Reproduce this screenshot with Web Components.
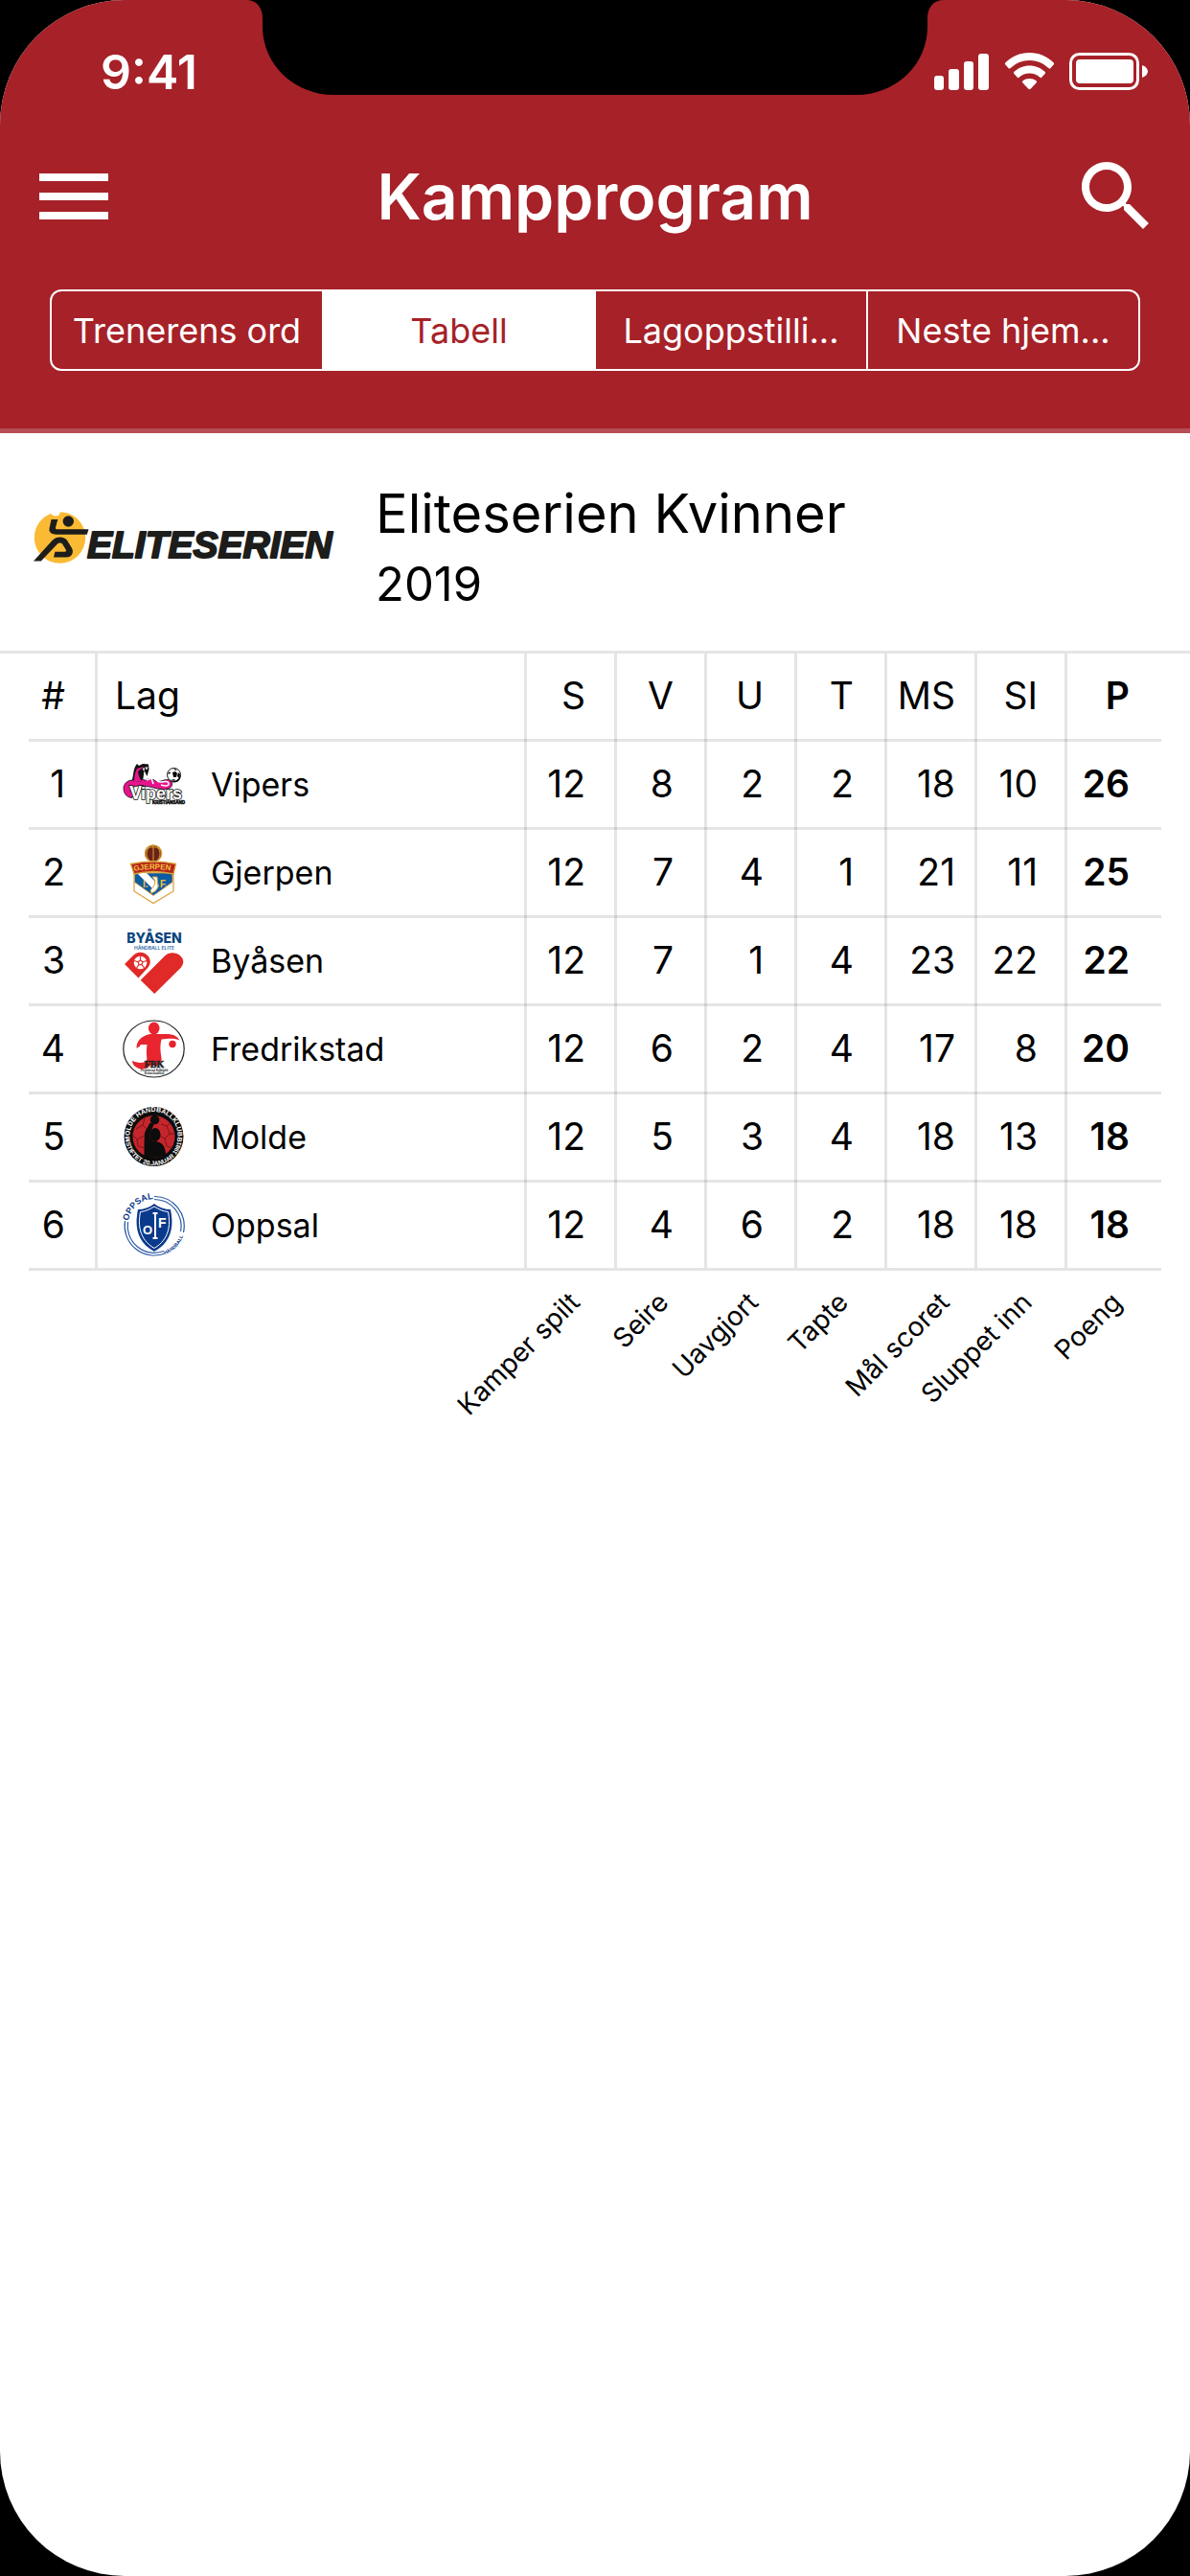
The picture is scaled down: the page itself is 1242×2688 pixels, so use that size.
<!DOCTYPE html>
<html lang="no">
<head>
<meta charset="utf-8">
<meta name="viewport" content="width=device-width, initial-scale=1">
<title>Kampprogram</title>
<style>
    body {
        margin: 0;
        background: #000;
        color: #000;
        font-family: Inter, "Liberation Sans", sans-serif;
        --brand: #a62128;
        --line: rgba(0, 0, 0, .1);
    }
</style>
</head>
<body>

<app-screen>
    <status-bar slot="header" time="9:41"></status-bar>
    <nav-bar slot="header">Kampprogram</nav-bar>
    <segment-control slot="header" selected="1" items="Trenerens ord|Tabell|Lagoppstilli...|Neste hjem..."></segment-control>
    <league-header>
        <span slot="name">Eliteserien Kvinner</span>
        <span slot="season">2019</span>
    </league-header>
    <standings-table></standings-table>
</app-screen>

<template id="appScreenTemplate">
    <style>
        :host {
            display: block;
            position: relative;
            min-height: 100vh;
            overflow: hidden;
            border-radius: 130px;
            background: #fff;
        }
        header {
            background: var(--brand);
            border-bottom: 5px solid #b84d54;
            padding-bottom: 60px;
        }
        .notch {
            position: absolute;
            top: 0;
            left: 50%;
            width: 728px;
            height: 99px;
            margin-left: -364px;
        }
    </style>
    <header><slot name="header"></slot></header>
    <main><slot></slot></main>
    <svg class="notch" viewBox="0 0 728 99" aria-hidden="true">
        <path d="M0 0C11 0 17 8 17 19V28A74 71 0 0 0 91 99H637A74 71 0 0 0 711 28V19C711 8 717 0 728 0Z"/>
    </svg>
</template>

<template id="statusBarTemplate">
    <style>
        :host {
            display: flex;
            justify-content: space-between;
            align-items: center;
            height: 157px;
            padding: 0 44px 0 105px;
            box-sizing: border-box;
            color: #fff;
        }
        .time, svg { margin-bottom: 8px; }
        .time {
            font-size: 50px;
            line-height: 60px;
            font-weight: 600;
        }
    </style>
    <span class="time"></span>
    <svg width="224" height="40" viewBox="0 0 224 40" fill="#fff" aria-hidden="true">
        <rect x="1" y="24" width="10" height="15" rx="3"/>
        <rect x="16" y="17" width="11" height="22" rx="3"/>
        <rect x="32" y="9" width="10" height="30" rx="3"/>
        <rect x="47" y="1" width="11" height="38" rx="3"/>
        <path d="M100.500 0c10 0 18.500 4 25 10.200.8.800.8 1.600.1 2.400l-3 3.300c-.7.800-1.500.7-2.300 0A29 29 0 0 0 100.500 8a29 29 0 0 0-19.800 7.900c-.8.700-1.600.8-2.300 0l-3-3.300c-.7-.8-.7-1.600.1-2.400C82 4 90.500 0 100.500 0z"/>
        <path d="M100.500 13.500c6.200 0 11.800 2.400 16 6.300.8.700.8 1.500.1 2.300l-3.200 3.500c-.7.700-1.500.7-2.300 0a15.600 15.600 0 0 0-21.200 0c-.8.700-1.600.7-2.300 0l-3.200-3.500c-.7-.8-.7-1.600.1-2.300 4.200-3.900 9.800-6.300 16-6.300z"/>
        <path d="M100.500 27c2.700 0 5 .9 6.900 2.300.9.700.9 1.500.1 2.300l-5.600 6c-.9.900-1.900.9-2.800 0l-5.600-6c-.8-.8-.8-1.600.1-2.300 1.900-1.400 4.200-2.300 6.900-2.300z"/>
        <rect x="143.500" y="1.500" width="70" height="36" rx="9" fill="none" stroke="#fff" stroke-width="3"/>
        <rect x="149" y="7" width="60" height="25" rx="4"/>
        <path d="M218 13c4 1.500 6 4 6 6.500s-2 5-6 6.500z"/>
    </svg>
</template>

<template id="navBarTemplate">
    <style>
        :host {
            display: grid;
            grid-template-columns: 96px 1fr 96px;
            align-items: center;
            padding: 0 29px;
            color: #fff;
        }
        h1 {
            margin: 0;
            font-size: 66px;
            line-height: 80px;
            font-weight: 600;
            text-align: center;
        }
        button {
            width: 96px;
            height: 96px;
            padding: 0;
            border: 0;
            background: none;
            cursor: pointer;
        }
        svg { display: block; fill: #fff; }
    </style>
    <button type="button" aria-label="Meny">
        <svg width="96" height="96" viewBox="0 0 24 24"><path d="M3 18h18v-2H3v2zm0-5h18v-2H3v2zm0-7v2h18V6H3z"/></svg>
    </button>
    <h1><slot></slot></h1>
    <button type="button" aria-label="Søk">
        <svg width="96" height="96" viewBox="0 0 24 24"><path d="M15.500 14h-.79l-.28-.27C15.410 12.590 16 11.110 16 9.500 16 5.910 13.090 3 9.500 3S3 5.910 3 9.500 5.910 16 9.500 16c1.610 0 3.090-.59 4.230-1.570l.27.28v.79l5 4.990L20.490 19l-4.990-5zm-6 0C7.010 14 5 11.990 5 9.500S7.010 5 9.500 5 14 7.010 14 9.500 11.990 14 9.500 14z"/></svg>
    </button>
</template>

<template id="segmentControlTemplate">
    <style>
        :host {
            display: block;
            margin: 49px 52px 0;
        }
        div {
            display: flex;
            border: 2px solid #fff;
            border-radius: 12px;
        }
        button {
            flex: 1 1 0;
            height: 81px;
            padding: 0;
            border: 0;
            border-left: 2px solid #fff;
            background: none;
            color: #fff;
            font: inherit;
            font-size: 36px;
            line-height: 48px;
            white-space: nowrap;
            cursor: pointer;
        }
        button:first-child {
            border-left: 0;
            border-radius: 10px 0 0 10px;
        }
        button:last-child { border-radius: 0 10px 10px 0; }
        button[aria-selected=true] {
            background: #fff;
            color: var(--brand);
        }
    </style>
    <div role="tablist"></div>
</template>

<template id="leagueHeaderTemplate">
    <style>
        :host {
            display: flex;
            align-items: center;
            gap: 41px;
            padding: 48px 35px 33px;
            border-bottom: 3px solid #e5e5e5;
        }
        .logo {
            flex: none;
            margin-bottom: 24px;
        }
        h2, p {
            margin: 0;
            line-height: 73px;
            font-weight: 400;
        }
        h2 { font-size: 56px; }
        p { font-size: 49px; }
    </style>
    <svg class="logo" width="316" height="54" viewBox="0 0 316 54">
        <circle cx="27.500" cy="27" r="26.700" fill="#fbba34"/>
        <path d="M17 -1q1 5 5.500 5.500T28 0z" fill="#fff"/>
        <g fill="#1d1d1b">
            <circle cx="36.300" cy="10" r="5.700"/>
            <path d="M18.500 8h6.800l-2.300 8.500c-.3 1.300.2 1.700 1.400 1.700H57.500l-1.700 5.600H24c-5 0-8.500-2.200-7.400-6.700z"/>
            <path d="M0 51.500L19.500 30c4.500-4.600 12.500-4.600 15.800.2l4.700 7.800c2.500 4.600-.3 9.500-5.500 9.500H21l1.400-5.800h10c1.600 0 2-1 1.300-2.300l-3.700-5.900c-1-1.500-3.600-1.500-5 0L7.800 51.500z"/>
            <text x="56" y="48" font-family="Liberation Sans, Arial, sans-serif" font-size="39" font-weight="700" font-style="italic" stroke="#1d1d1b" stroke-width="2" stroke-linejoin="round">ELITESERIEN</text>
        </g>
    </svg>
    <div>
        <h2><slot name="name"></slot></h2>
        <p><slot name="season"></slot></p>
    </div>
</template>

<template id="standingsTableTemplate">
    <style>
        :host {
            display: block;
            padding: 0 30px;
            font-size: 39px;
            line-height: 48px;
        }
        table {
            width: 100%;
            table-layout: fixed;
            border-spacing: 0;
        }
        .rank { width: 72px; }
        .num { width: 94px; }
        .points { width: 98px; }
        th, td {
            height: 92px;
            padding: 0 35px 5px 0;
            box-sizing: border-box;
            text-align: right;
            font-weight: 400;
            white-space: nowrap;
            background:
                linear-gradient(var(--line) 0 0) right top / 3px 100% no-repeat,
                linear-gradient(var(--line) 0 0) left bottom / 100% 3px no-repeat;
        }
        tbody tr:last-child > * {
            background-size: 3px calc(100% - 3px), 100% 3px;
        }
        tr > :nth-child(2) {
            padding-left: 18px;
            text-align: left;
        }
        tr > :nth-child(3) { padding-right: 33px; }
        tr > :nth-child(7) { padding-right: 23px; }
        tr > :nth-child(8) { padding-right: 31px; }
        thead tr > :last-child, tbody tr > :last-child {
            padding-right: 33px;
            background-image: none, linear-gradient(var(--line) 0 0);
            font-weight: 600;
        }
        thead th:first-child, tbody td:first-child { padding-right: 34px; }
        .team {
            display: flex;
            align-items: center;
            gap: 26px;
            padding: 2px 0 0 8px;
            font-size: 34px;
        }
        tfoot td {
            height: 160px;
            padding-top: 7px;
            vertical-align: top;
            background: none;
            font-size: 28px;
            line-height: 32px;
        }
        .legend {
            display: flex;
            justify-content: flex-end;
        }
        .legend span {
            transform: rotate(-45deg);
            transform-origin: right bottom;
        }
    </style>
    <table>
        <colgroup>
            <col class="rank"><col>
            <col class="num"><col class="num"><col class="num">
            <col class="num"><col class="num"><col class="num">
            <col class="points">
        </colgroup>
        <thead><tr></tr></thead>
        <tbody></tbody>
        <tfoot><tr></tr></tfoot>
    </table>
</template>

<template id="crest-vipers">
    <svg viewBox="0 0 66 68">
        <path d="M14 29C5 28 .8 33 1 38c.2 5 3 9 9 9.500l2-4c-4-1-5-5-2-7l8-2 13 2c8 3 18 3 20-1s0-7-4-7-7 2-10 2-5-3-8-3-4 1-5 2l-4-2 1-6-9 .5z" fill="#e6158c" stroke="#111" stroke-width=".8"/>
        <path d="M10 29c1-5 1-9 3-14l2-3 2 2 4-2 6 .5.500 5.500-2 7-3-6-1 8-3 4z" fill="#111"/>
        <path d="M12 30c0-5 1-9 3-13l7-2-6 5 1 5 3 6z" fill="#e6158c"/>
        <path d="M21 16l1 3 1-3M24 15l1 3 1-3" stroke="#fff" stroke-width=".8" fill="none"/>
        <path d="M31 27c4-1 4 5 9 4s8-1 8 2-5 2-8 1M25 29l5-2 2 6" fill="none" stroke="#fff" stroke-width="1.500"/>
        <circle cx="53.500" cy="23.500" r="7" fill="#fff" stroke="#111" stroke-width="1"/>
        <path d="M52 21l3-1 2 2-1 4-3 0zM47 23l2-3 1 2zM50 29l4-1 1 2zM58 21l2 2-1 4-2-2zM53 17l4 1-2 1z"/>
        <path d="M49 30c5 2 10-1 11-7 2 6-4 11-11 7z"/>
        <g font-family="Liberation Sans, Arial, sans-serif" font-weight="700" fill="#fff" stroke="#111" paint-order="stroke" stroke-width="1.600">
            <text x="7" y="49" font-size="20">V</text>
            <text x="19" y="49" font-size="18">ipers</text>
            <text x="31" y="54" font-size="4.500" stroke-width=".5" fill="#111">KRISTIANSAND</text>
        </g>
    </svg>
</template>

<template id="crest-gjerpen">
    <svg viewBox="0 0 66 68">
        <circle cx="32" cy="13.500" r="8.700" fill="#6b2318" stroke="#d9a036" stroke-width="1.300"/>
        <path d="M32 5v17M28 6c-4 5-4 11 0 15M36 6c4 5 4 11 0 15M25 9c5-3 9-3 14 0" fill="none" stroke="#d9a036" stroke-width="1"/>
        <path d="M12 34h41v19L32 65.500 12 53z" fill="#fff" stroke="#d9a036" stroke-width="1.200"/>
        <path d="M12.500 34h39.500v9.500L32 57.500 12.500 43.500z" fill="#0d5ba3" stroke="#d9a036" stroke-width=".8"/>
        <path d="M15 34h10l13 13-5 5z" fill="#fff"/>
        <path d="M31 38l3 4-1 5-4 5 1 3 4-2 3-4-1-11z" fill="#fff" stroke="#d9a036" stroke-width="1"/>
        <path d="M8.500 24.500q23.500-5 47 0L53 35q-21-5-41 0z" fill="#b5251f" stroke="#d9a036" stroke-width="1.300"/>
        <g font-family="Liberation Sans, Arial, sans-serif" font-weight="700" fill="#f3c23c">
            <path id="gjerpenArc" d="M12 32q20-4 42 0" fill="none"/>
            <text font-size="8"><textPath href="#gjerpenArc">GJERPEN</textPath></text>
            <text x="21" y="49" font-size="10">I.</text>
            <text x="39" y="49" font-size="10">F.</text>
        </g>
    </svg>
</template>

<template id="crest-byasen">
    <svg viewBox="0 0 66 68">
        <g font-family="Inter, sans-serif" fill="#0b457e" text-anchor="middle">
            <text x="33" y="15" font-size="14" font-weight="800">BYÅSEN</text>
            <text x="33" y="22" font-size="5" font-weight="600" fill="#2b6aa5">HÅNDBALL ELITE</text>
        </g>
        <path d="M2 37l8.500-8.500a10.500 10.500 0 0 1 16 0c3 4 3 8 0 12L16.500 51.500z" fill="#df2a28"/>
        <path d="M18.700 53.800L44 28.500c9-9 26 2 16.500 12.500L33.200 68z" fill="#df2a28"/>
        <circle cx="18.500" cy="35.500" r="6.800" fill="#fff"/>
        <path d="M18.500 33l2.500 1.800-1 2.900h-3l-1-2.900zM18.500 29v4M12 33.500l4 1.300M25 33.500l-4 1.300M14.500 41l2.500-3.300M22.500 41l-2.500-3.300" fill="none" stroke="#df2a28" stroke-width="1.200"/>
    </svg>
</template>

<template id="crest-fredrikstad">
    <svg viewBox="0 0 66 68">
        <ellipse cx="32.500" cy="33.500" rx="31.700" ry="29.500" fill="#fff" stroke="#222" stroke-width="1.200"/>
        <g fill="#e8252e">
            <ellipse cx="32.700" cy="12" rx="5.800" ry="6.500"/>
            <path d="M14.700 33C14 28 17 23 22 20.500 25 18.500 28 18 32 18h14c6 0 11 2 13.500 6.500-5.500-3-13.500-1.500-19-1C39 29 39 35 40.500 43c.5 5-2.500 7-4.500 8h-7c-4 3-9 5-12 3-5-2-7-5-7-8 5 2 11 3 15 0 1-3-1-8 .5-17h-7c.5 2-2.500 2.500-3.800 4z"/>
            <circle cx="52" cy="28.500" r="3.700"/>
        </g>
        <g font-family="Liberation Serif, Times New Roman, serif" font-weight="700" fill="#222" text-anchor="middle">
            <text x="33" y="53" font-size="10" stroke="#222" stroke-width=".5">FBK</text>
            <text x="33" y="57" font-size="3">Fredrikstad Ballklubb</text>
            <text x="33" y="60" font-size="3">Kvinnehåndball</text>
        </g>
    </svg>
</template>

<template id="crest-molde">
    <svg viewBox="0 0 66 68">
        <circle cx="32.500" cy="33" r="31" fill="#0c0c0c"/>
        <circle cx="32.500" cy="33" r="22" fill="#c4262b"/>
        <path d="M14 25l7-4 4 4-2 7-8 4-4-4M21 21l2-7M40 20l6 2 3 8-5 5-6-3M46 22l4-3M49 30h5M44 35l2 8 6 2M15 36l1 7 7 2" fill="none" stroke="#7d1417" stroke-width="1"/>
        <g fill="#0c0c0c">
            <circle cx="33.500" cy="15.500" r="4.800"/>
            <ellipse cx="34" cy="31" rx="5.500" ry="7"/>
            <path d="M28.500 18.500L23 29l-.5 11v14c8 2 16 1 22.500-2 0-6-2-11-6.500-13L31 37l-2.500-4 .8-5 3.500-8z"/>
        </g>
        <path id="moldeTop" d="M8.500 39a25 25 0 1 1 48 0" fill="none"/>
        <path id="moldeBottom" d="M3.500 39a29.500 29.500 0 0 0 58 0" fill="none"/>
        <g font-family="Liberation Sans, Arial, sans-serif" font-size="7" font-weight="700" fill="#fff" text-anchor="middle">
            <text><textPath href="#moldeTop" startOffset="50%">MOLDE HÅNDBALLKLUBB</textPath></text>
            <text font-size="6.500"><textPath href="#moldeBottom" startOffset="50%">STIFTET 20.JANUAR 1981</textPath></text>
        </g>
    </svg>
</template>

<template id="crest-oppsal">
    <svg viewBox="0 0 66 68">
        <g fill="none" stroke="#2a5aa5" stroke-width="1.200">
            <path d="M33 3.500A31 31 0 0 1 63.500 41M33 6.500A28 28 0 0 1 60.500 40"/>
            <path d="M2.500 29A31 31 0 0 0 44 63M5.500 30A28 28 0 0 0 43 60.500"/>
        </g>
        <path d="M33 11c5 4 11 6 17 6 3 15 3 33-17 44C13 50 13 32 16 17c6 0 12-2 17-6z" fill="#0a3a8c"/>
        <path d="M33 14c5 3 9 5 14.500 5.500C50 33 49 48 33 57.500 17 48 16 33 18.500 19.500 24 19 28 17 33 14z" fill="none" stroke="#fff" stroke-width="1"/>
        <g font-family="Liberation Sans, Arial, sans-serif" font-weight="700" fill="#fff">
            <text x="21" y="43" font-size="13">O</text>
            <text x="37" y="36" font-size="14">F</text>
            <path d="M31.500 20h5v2h-1.500v24h1.500v2h-5v-2H33V22h-1.500z"/>
        </g>
        <path id="oppsalTop" d="M6 29A28 28 0 0 1 36 6" fill="none"/>
        <path id="oppsalBottom" d="M44 64A31 31 0 0 0 64 41" fill="none"/>
        <g font-family="Liberation Sans, Arial, sans-serif" font-weight="700" fill="#0a3a8c">
            <text font-size="9"><textPath href="#oppsalTop">OPPSAL</textPath></text>
            <text font-size="5"><textPath href="#oppsalBottom">HÅNDBALL</textPath></text>
        </g>
    </svg>
</template>

<script>
    // Base class: attaches an open shadow root with a copy of the template
    class TemplateElement extends HTMLElement {
        constructor(templateId) {
            super();
            const template = document.getElementById(templateId);
            this.attachShadow({mode: 'open'}).appendChild(template.content.cloneNode(true));
        }
    }

    class AppScreen extends TemplateElement {
        constructor() { super('appScreenTemplate'); }
    }

    class StatusBar extends TemplateElement {
        constructor() { super('statusBarTemplate'); }

        connectedCallback() {
            this.shadowRoot.querySelector('.time').textContent = this.getAttribute('time');
        }
    }

    class NavBar extends TemplateElement {
        constructor() { super('navBarTemplate'); }
    }

    class SegmentControl extends TemplateElement {
        constructor() { super('segmentControlTemplate'); }

        connectedCallback() {
            const list = this.shadowRoot.querySelector('div');
            list.innerHTML = this.getAttribute('items').split('|')
                .map(label => `<button type="button" role="tab">${label}</button>`).join('');
            list.addEventListener('click', e => {
                const index = [...list.children].indexOf(e.target);
                if (index > -1) this.select(index);
            });
            this.select(Number(this.getAttribute('selected')));
        }

        select(index) {
            [...this.shadowRoot.querySelectorAll('button')].forEach((button, i) => {
                button.setAttribute('aria-selected', i === index);
            });
        }
    }

    class LeagueHeader extends TemplateElement {
        constructor() { super('leagueHeaderTemplate'); }
    }

    // <team-crest club="molde"> draws the badge of one club
    class TeamCrest extends HTMLElement {
        constructor() {
            super();
            this.attachShadow({mode: 'open'});
        }

        connectedCallback() {
            this.shadowRoot.innerHTML = `
                <style>
                    :host { display: block; flex: none; width: 66px; height: 68px; }
                    svg { display: block; width: 66px; height: 68px; overflow: visible; }
                </style>`;
            const crest = document.getElementById('crest-' + this.getAttribute('club'));
            this.shadowRoot.appendChild(crest.content.cloneNode(true));
        }
    }

    const columns = [
        ['S', 'Kamper spilt'],
        ['V', 'Seire'],
        ['U', 'Uavgjort'],
        ['T', 'Tapte'],
        ['MS', 'Mål scoret'],
        ['SI', 'Sluppet inn'],
        ['P', 'Poeng']
    ];

    const teams = [
        {club: 'vipers', name: 'Vipers', stats: [12, 8, 2, 2, 18, 10, 26]},
        {club: 'gjerpen', name: 'Gjerpen', stats: [12, 7, 4, 1, 21, 11, 25]},
        {club: 'byasen', name: 'Byåsen', stats: [12, 7, 1, 4, 23, 22, 22]},
        {club: 'fredrikstad', name: 'Fredrikstad', stats: [12, 6, 2, 4, 17, 8, 20]},
        {club: 'molde', name: 'Molde', stats: [12, 5, 3, 4, 18, 13, 18]},
        {club: 'oppsal', name: 'Oppsal', stats: [12, 4, 6, 2, 18, 18, 18]}
    ];

    class StandingsTable extends TemplateElement {
        constructor() { super('standingsTableTemplate'); }

        connectedCallback() {
            const root = this.shadowRoot;
            root.querySelector('thead tr').innerHTML = '<th scope="col">#</th><th scope="col">Lag</th>' +
                columns.map(([short]) => `<th scope="col">${short}</th>`).join('');
            root.querySelector('tbody').innerHTML = teams.map((team, i) => `
                <tr>
                    <td>${i + 1}</td>
                    <td><div class="team"><team-crest club="${team.club}"></team-crest><span>${team.name}</span></div></td>
                    ${team.stats.map(value => `<td>${value}</td>`).join('')}
                </tr>`).join('');
            root.querySelector('tfoot tr').innerHTML = '<td></td><td></td>' +
                columns.map(([, label]) => `<td><div class="legend"><span>${label}</span></div></td>`).join('');
        }
    }

    customElements.define('app-screen', AppScreen);
    customElements.define('status-bar', StatusBar);
    customElements.define('nav-bar', NavBar);
    customElements.define('segment-control', SegmentControl);
    customElements.define('league-header', LeagueHeader);
    customElements.define('team-crest', TeamCrest);
    customElements.define('standings-table', StandingsTable);
</script>
</body>
</html>
